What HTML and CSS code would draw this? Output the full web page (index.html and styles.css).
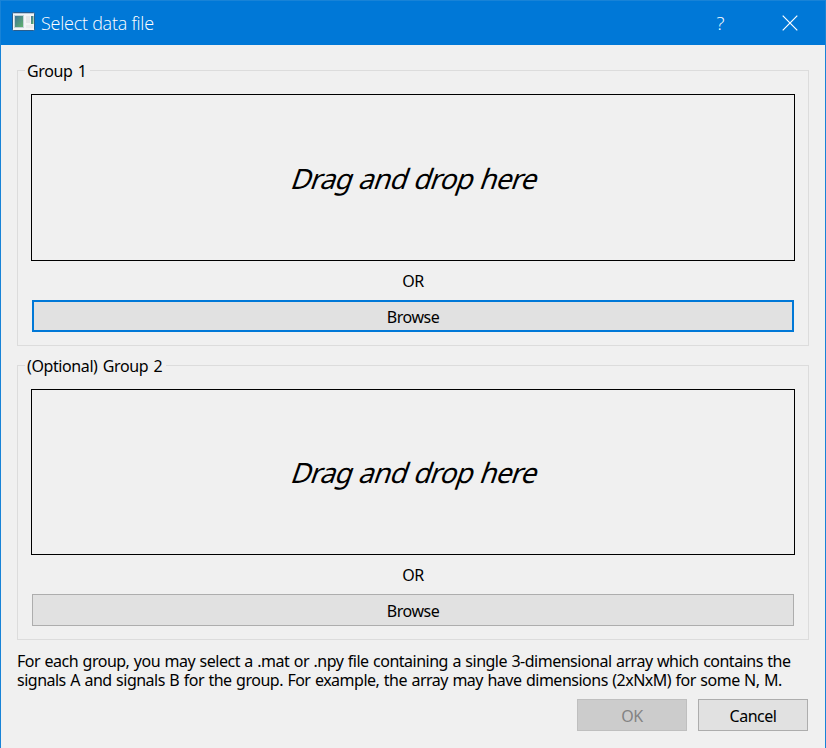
FILE: index.html
```html
<!DOCTYPE html>
<html lang="en">
<head>
<meta charset="utf-8">
<title>Select data file</title>
<link rel="stylesheet" href="styles.css">
</head>
<body>
<div class="window">
  <header class="titlebar">
    <svg class="app-icon" width="23" height="19" viewBox="0 0 23 19">
      <defs>
        <linearGradient id="pane" x1="0" y1="0" x2="1" y2="1">
          <stop offset="0" stop-color="#3d719c"/>
          <stop offset="1" stop-color="#63b568"/>
        </linearGradient>
      </defs>
      <rect x="0.5" y="0.5" width="22" height="18" rx="1" fill="#f3f4f5" stroke="#2a5d8c"/>
      <rect x="1" y="1" width="21" height="1" fill="#b9cbdc"/>
      <rect x="2.5" y="3.5" width="9" height="12" fill="url(#pane)" stroke="#c3d3d8"/>
      <rect x="14" y="4" width="4" height="7" fill="#e4e6e8"/>
      <rect x="19" y="4" width="2.5" height="8" fill="url(#pane)"/>
      <rect x="14" y="13" width="7" height="3" fill="#e9ebec"/>
    </svg>
    <h1 class="title">Select data file</h1>
    <span class="help-mark">?</span>
    <svg class="close" width="16" height="16" viewBox="0 0 16 16">
      <path d="M.7 .7 15.3 15.3M15.3 .7.7 15.3" fill="none" stroke="#fff" stroke-width="1.2"/>
    </svg>
  </header>
  <main class="content">
    <section class="group first">
      <h2 class="legend"><span class="legend-text">Group 1</span></h2>
      <div class="drop"><span class="drop-text">Drag and drop here</span></div>
      <div class="or">OR</div>
      <button class="button browse focused"><span>Browse</span></button>
    </section>
    <section class="group second">
      <h2 class="legend"><span class="legend-text">(Optional) Group 2</span></h2>
      <div class="drop"><span class="drop-text">Drag and drop here</span></div>
      <div class="or">OR</div>
      <button class="button browse"><span>Browse</span></button>
    </section>
    <p class="note">For each group, you may select a .mat or .npy file containing a single 3-dimensional array which contains the<br>signals A and signals B for the group. For example, the array may have dimensions (2xNxM) for some N, M.</p>
    <footer class="actions">
      <button class="button action disabled" disabled><span>OK</span></button>
      <button class="button action"><span>Cancel</span></button>
    </footer>
  </main>
</div>
</body>
</html>
```
FILE: styles.css
```css
* { box-sizing: border-box; }
body {
  margin: 0;
  font: 16px/19px "Noto Sans", sans-serif;
  letter-spacing: -0.5px;
  word-spacing: 0.8px;
  color: #000;
}
.window {
  width: 826px;
  height: 748px;
  overflow: hidden;
  background: #f0f0f0;
  border: 1px solid #1883d7;
  border-bottom: 0;
}
.titlebar {
  display: flex;
  align-items: center;
  height: 44px;
  padding: 0 27px 0 11px;
  background: #0078d7;
  color: #fff;
}
.app-icon { margin-top: -3px; }
.title {
  margin: 0 auto 0 6px;
  font: 350 18px/24px "Open Sans", sans-serif;
  letter-spacing: -0.25px;
  word-spacing: 0;
}
.help-mark {
  margin-right: 58px;
  font: 350 19px/24px "Open Sans", sans-serif;
}
.content { padding: 25px 16px 0; }
.group {
  display: flex;
  flex-direction: column;
  padding: 0 13px;
  border: 1px solid #dcdcdc;
}
.first { height: 276px; margin-bottom: 19px; }
.second { height: 275px; }
.legend {
  display: flex;
  height: 19px;
  margin: -9px 0 13px -6px;
  font-size: 16px;
  font-weight: 400;
  letter-spacing: -0.4px;
  word-spacing: 1.6px;
}
.legend-text {
  padding: 0 4px 0 2px;
  background: #f0f0f0;
  white-space: nowrap;
}
.drop {
  display: flex;
  align-items: center;
  justify-content: center;
  height: 167px;
  padding: 0 0 0 5px;
  border: 1px solid #000;
}
.second .drop { height: 166px; }
.drop-text {
  font-size: 28px;
  line-height: 34px;
  letter-spacing: -0.95px;
  word-spacing: 1.2px;
  white-space: nowrap;
  transform: skewX(-19deg);
}
.or {
  height: 19px;
  margin: 11px 0 9px;
  text-align: center;
}
.button {
  display: flex;
  align-items: center;
  justify-content: center;
  height: 32px;
  padding: 2px 0 0;
  border: 1px solid #adadad;
  background: #e1e1e1;
  color: #000;
  font: inherit;
  letter-spacing: inherit;
}
.browse { margin: 0 1px; }
.focused { border: 2px solid #0078d7; }
.note { margin: 12px 0 9px; white-space: nowrap; }
.actions { display: flex; justify-content: flex-end; gap: 11px; padding-right: 1px; }
.action { width: 110px; }
.disabled { border-color: #bfbfbf; background: #ccc; color: #838383; }
```
